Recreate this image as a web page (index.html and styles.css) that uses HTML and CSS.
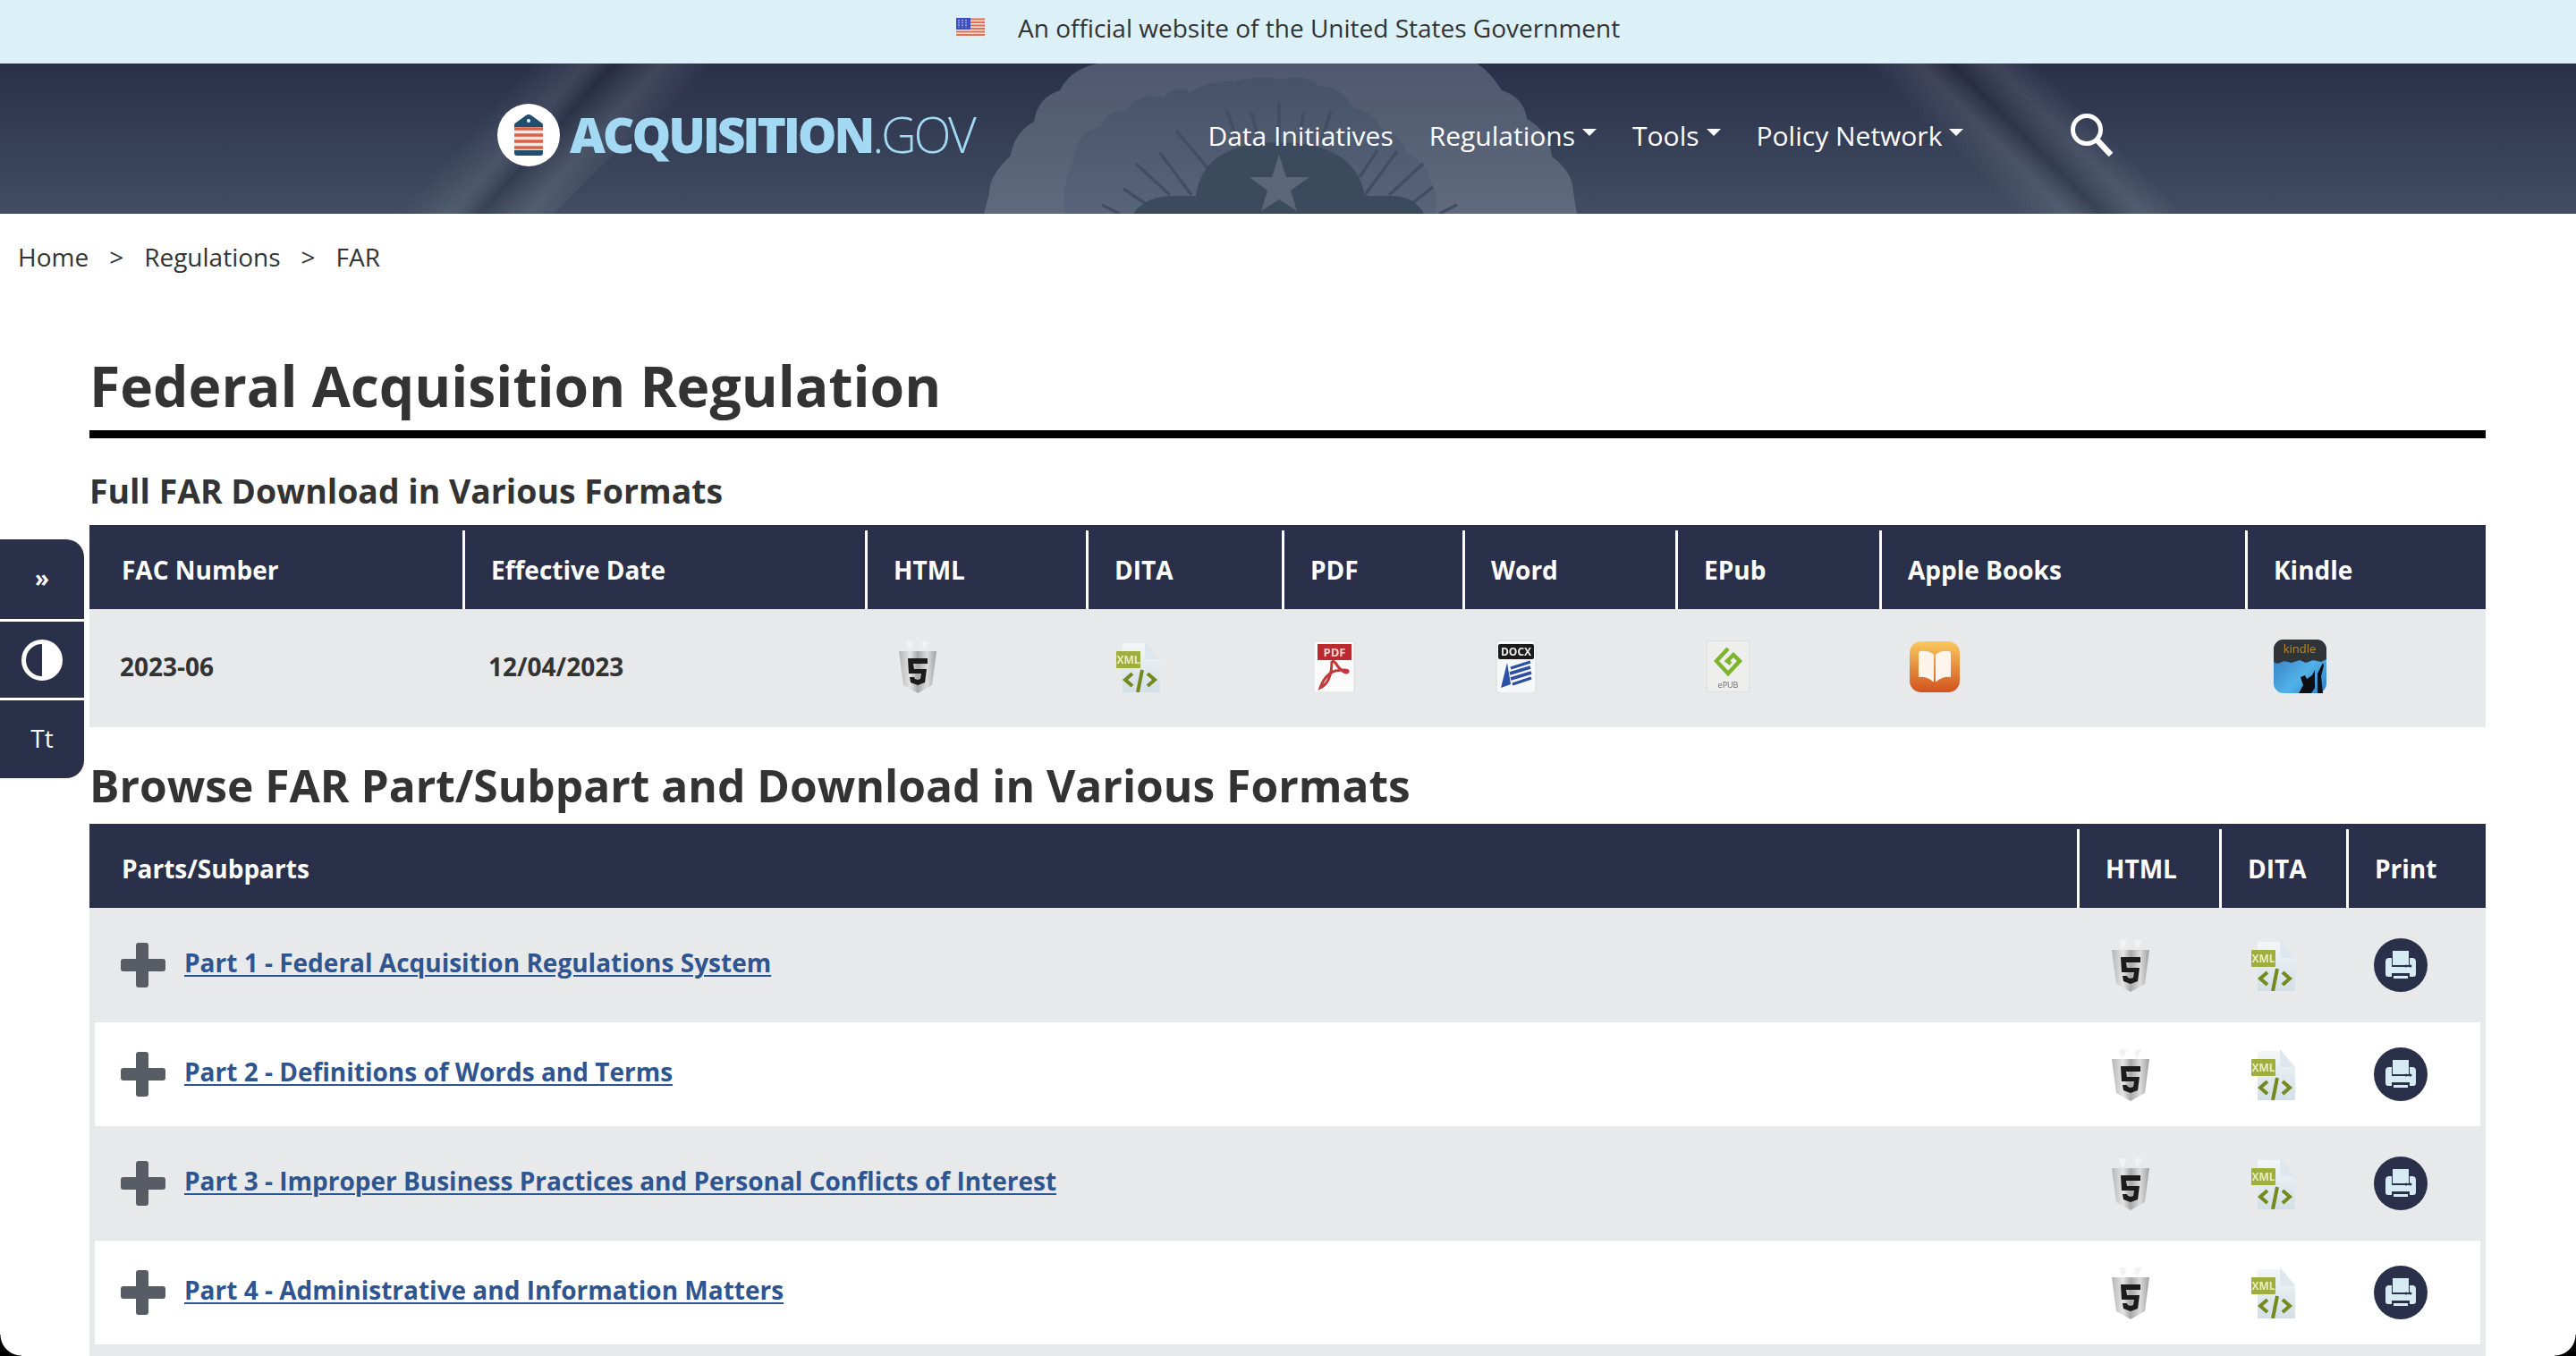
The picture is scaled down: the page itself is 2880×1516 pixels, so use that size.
FILE: index.html
```html
<!DOCTYPE html>
<html lang="en">
<head>
<meta charset="utf-8">
<title>Federal Acquisition Regulation | Acquisition.GOV</title>
<link rel="stylesheet" href="styles.css">
</head>
<body>
<svg class="defs" width="0" height="0" aria-hidden="true">
  <defs>
    <linearGradient id="band-left" gradientUnits="userSpaceOnUse" x1="563" y1="33" x2="677" y2="135">
      <stop offset="0" stop-color="#fff" stop-opacity="0"/><stop offset=".3" stop-color="#fff" stop-opacity=".09"/><stop offset=".46" stop-color="#000" stop-opacity=".12"/><stop offset=".72" stop-color="#fff" stop-opacity=".1"/><stop offset="1" stop-color="#fff" stop-opacity="0"/>
    </linearGradient>
    <linearGradient id="band-right" gradientUnits="userSpaceOnUse" x1="2217" y1="132" x2="2313" y2="36">
      <stop offset="0" stop-color="#fff" stop-opacity="0"/><stop offset=".3" stop-color="#fff" stop-opacity=".09"/><stop offset=".5" stop-color="#000" stop-opacity=".12"/><stop offset=".75" stop-color="#fff" stop-opacity=".09"/><stop offset="1" stop-color="#fff" stop-opacity="0"/>
    </linearGradient>
    <linearGradient id="seal-outer" x1="0" y1="0" x2="0" y2="1">
      <stop offset="0" stop-color="#4f586e"/><stop offset="1" stop-color="#5f6a7e"/>
    </linearGradient>
    <linearGradient id="seal-inner" x1="0" y1="0" x2="0" y2="1">
      <stop offset="0" stop-color="#465268"/><stop offset="1" stop-color="#586479"/>
    </linearGradient>
    <linearGradient id="silver" x1="0" y1="0" x2="1" y2="0">
      <stop offset="0" stop-color="#b4b4b4"/><stop offset=".3" stop-color="#e6e6e6"/><stop offset=".5" stop-color="#a8a8a8"/><stop offset=".75" stop-color="#dcdcdc"/><stop offset="1" stop-color="#a0a0a0"/>
    </linearGradient>
    <linearGradient id="doc" x1="0" y1="0" x2="0" y2="1">
      <stop offset="0" stop-color="#f3f6f8"/><stop offset="1" stop-color="#d3dfe7"/>
    </linearGradient>
    <linearGradient id="books" x1="0" y1="0" x2="0" y2="1">
      <stop offset="0" stop-color="#f8ca5e"/><stop offset="1" stop-color="#d2521f"/>
    </linearGradient>
    <linearGradient id="kindle-sky" x1="0" y1="0" x2="1" y2="1">
      <stop offset="0" stop-color="#2c6fb6"/><stop offset=".6" stop-color="#52b1e8"/><stop offset="1" stop-color="#2c7fc8"/>
    </linearGradient>
    <symbol id="i-html" viewBox="0 0 42 60">
      <path d="M9 2h7v4l-3 5h-2l-2-5zM26 2h8l-2 4-3 5h-2l-1-5z" fill="#f2f2f2"/>
      <path d="M0 13h42l-5 38-16 9-16-9z" fill="url(#silver)"/>
      <path d="M10 21h22v6H16l1 6h14l-2 15-8 3-8-3-1-6h5l1 2 3 1 3-1 1-6H11z" fill="#1c1c1c"/>
    </symbol>
    <symbol id="i-dita" viewBox="0 0 49 57">
      <path d="M7 2h26l16 19v36H7z" fill="url(#doc)"/>
      <path d="M32 0l17 20H32z" fill="#dfe7ee"/>
      <rect x="0" y="11" width="27" height="19" rx="1" fill="#9fae3e"/>
      <text x="13.5" y="25" class="tag-text">XML</text>
      <path d="M18 36l-8 7 8 7M35 36l8 7-8 7M29 32l-5 25" fill="none" stroke="#76891f" stroke-width="4"/>
    </symbol>
    <symbol id="i-pdf" viewBox="0 0 47 58">
      <rect x="1" y="1" width="45" height="57" rx="1" fill="#fbfbfb" stroke="#dcdcdc"/>
      <rect x="5" y="4" width="38" height="18" fill="#bb2a2e"/>
      <text x="24" y="18" class="pdf-text">PDF</text>
      <path d="M21 23c0 14-4 26-13 30 0 0 5-16 17-19 6-1 15-2 14 1s-9-1-14-10c-2-2-4-2-4-2" fill="none" stroke="#c13a3d" stroke-width="3"/>
    </symbol>
    <symbol id="i-word" viewBox="0 0 46 60">
      <rect x="1" y="1" width="44" height="59" rx="4" fill="#f6f7f9" stroke="#d8d8d8"/>
      <rect x="3" y="5" width="40" height="17" rx="2" fill="#1b1b1b"/>
      <text x="23" y="18" class="docx-text">DOCX</text>
      <path d="M6 54l7-28 4 24z" fill="#2a52a8"/>
      <path d="M17 32l22-7M16 38l23-7M17 44l23-7M19 50l21-7" fill="none" stroke="#2c4ea1" stroke-width="3.4"/>
    </symbol>
    <symbol id="i-epub" viewBox="0 0 48 58">
      <rect x=".5" y=".5" width="47" height="57" fill="#eeeeec" stroke="#dedede"/>
      <path d="M24 9L11 23l13 14 13-14-7-7-7 7 4 3" fill="none" stroke="#7cb52b" stroke-width="4.4"/>
      <text x="24" y="53" class="epub-text">ePUB</text>
    </symbol>
    <symbol id="i-books" viewBox="0 0 56 57">
      <rect width="56" height="57" rx="13" fill="url(#books)"/>
      <path d="M26 14c-4-3-9-4-14-3-1 0-2 1-2 2v27c6-1 12 1 16 5 1 1 1-1 1-1V15zM30 14c4-3 9-4 14-3 1 0 2 1 2 2v27c-6-1-12 1-16 5-1 1-1-1-1-1V15z" fill="#fdf4ec"/>
    </symbol>
    <symbol id="i-kindle" viewBox="0 0 59 60">
      <rect width="59" height="60" rx="11" fill="url(#kindle-sky)"/>
      <path d="M0 11a11 11 0 0 1 11-11h37a11 11 0 0 1 11 11v11l-6 3-9-2-8 3-7-3-9 3-8-2-8 3-4-2z" fill="#303338"/>
      <text x="29" y="15" class="kindle-text">kindle</text>
      <path d="M49 60V38l6-12 1 3-3 12 2 19zM28 60l5-9-3-9 5-2 2 4 6-4 3-6v20l-4 6z" fill="#0d0f12"/>
    </symbol>
    <symbol id="i-print" viewBox="0 0 60 60">
      <circle cx="30" cy="30" r="30" fill="#2a3049"/>
      <path d="M21 14h18v16H21z" fill="#d6ebf4"/>
      <path d="M17 22h3v10h20V22h3c3 0 4 2 4 4v14c0 2-1 3-3 3h-4v-4H20v4h-4c-2 0-3-1-3-3V26c0-2 1-4 4-4z" fill="#d6ebf4"/>
      <circle cx="41" cy="31" r="1.5" fill="#2a3049"/><circle cx="36" cy="31" r="1.5" fill="#2a3049"/>
      <rect x="22" y="42" width="16" height="3" fill="#d6ebf4"/>
    </symbol>
    <symbol id="i-plus" viewBox="0 0 50 50">
      <path d="M20 0h8a3 3 0 0 1 3 3v15h16a3 3 0 0 1 3 3v8a3 3 0 0 1-3 3H31v15a3 3 0 0 1-3 3h-8a3 3 0 0 1-3-3V32H3a3 3 0 0 1-3-3v-8a3 3 0 0 1 3-3h14V3a3 3 0 0 1 3-3z" fill="#585c65"/>
    </symbol>
  </defs>
</svg>

<div class="page">
  <div class="gov-banner">
    <svg class="flag" viewBox="0 0 32 22" aria-hidden="true">
      <rect width="32" height="22" fill="#f6e4dc"/>
      <path d="M0 1.5h32M0 5h32M0 8.5h32M0 12h32M0 15.5h32M0 19h32" stroke="#dd7058" stroke-width="1.8"/>
      <rect width="16" height="13" fill="#3d4ec0"/>
      <path d="M3 2v9M7 2v9M11 2v9" stroke="#c6cbef" stroke-width="1.4" stroke-dasharray="1.4 1.4"/>
    </svg>
    <span class="gov-text">An official website of the United States Government</span>
  </div>

  <header class="site-header">
    <svg class="header-art" viewBox="0 0 2880 168" aria-hidden="true">
      <path d="M578 0H813Q700 80 620 168H436Q490 75 578 0z" fill="url(#band-left)"/>
      <path d="M2069 0H2299Q2380 85 2445 168H2257Q2170 75 2069 0z" fill="url(#band-right)"/>
      <path d="M1227 0q-30 6-42 30-25 8-29 35-22 12-26 38-24 22-24 42l-6 23H1763l-4-24q0-22-24-40-3-28-28-42-3-24-28-32-14-22-28-30z" fill="url(#seal-outer)"/>
      <path d="M1191 168q-6-30 9-61 4-32 31-36 4-18 28-18 14-22 42-15 12-16 29-6 24-14 50-12 28-8 52-2 30-8 44 8 24-2 37 24 22 2 30 22 24 8 30 28 22 12 26 30 10 20 6 38z" fill="url(#seal-inner)"/>
      <g stroke="#414d62" stroke-width="3.4" fill="none">
        <path d="M1270 112l38 35M1297 100l35 47M1315 75l42 50M1372 53l12 35M1399 55l9 33M1430 43v45M1457 55l-4 33M1488 53l-11 35M1540 97l-20 30M1562 98l-36 49M1591 112l-38 35M1602 138l-24 19M1256 140l25 17M1232 158l20 10M1629 158l-20 10"/>
      </g>
      <path d="M1267 168q14-20 45-20h25q8-60 93-60t96 60h34q22 2 32 20z" fill="#3c4a5e"/>
      <path d="M1430 102l8 25h26l-21 15 7 23-20-13-20 13 7-23-20-15h25z" fill="#5b6679"/>
    </svg>
    <a class="logo" href="#">
      <span class="logo-badge">
        <svg class="shield" viewBox="0 0 32 46" aria-hidden="true">
          <path d="M2 9l11-8a5 5 0 0 1 6 0l11 8a3 3 0 0 1 2 3v31a3 3 0 0 1-3 3H3a3 3 0 0 1-3-3V12a3 3 0 0 1 2-3z" fill="#1e4f6f"/>
          <circle cx="16" cy="7" r="2" fill="#fff"/>
          <path d="M0 14h32v26H0z" fill="#f6e6df"/>
          <path d="M0 16h32M0 23h32M0 30h32M0 37h32" stroke="#d9614a" stroke-width="3.4"/>
        </svg>
      </span>
      <span class="logo-name">ACQUISITION</span><span class="logo-gov">.GOV</span>
    </a>
    <nav class="main-nav">
      <a href="#" class="nav-link">Data Initiatives</a>
      <a href="#" class="nav-link has-caret">Regulations</a>
      <a href="#" class="nav-link has-caret">Tools</a>
      <a href="#" class="nav-link has-caret">Policy Network</a>
    </nav>
    <svg class="search" viewBox="0 0 49 49" aria-hidden="true">
      <circle cx="19" cy="19" r="15.5" fill="none" stroke="#fff" stroke-width="5"/>
      <path d="M30 30l16 17" stroke="#fff" stroke-width="6.5"/>
    </svg>
  </header>

  <div class="breadcrumb">
    <a href="#">Home</a><span class="crumb-sep">&gt;</span><a href="#">Regulations</a><span class="crumb-sep">&gt;</span><a href="#">FAR</a>
  </div>

  <aside class="side-tools">
    <button class="tool tool-first">»</button>
    <button class="tool tool-mid"><span class="contrast"></span></button>
    <button class="tool tool-last">Tt</button>
  </aside>

  <main class="content">
    <h1 class="page-title">Federal Acquisition Regulation</h1>
    <h2 class="sub-title">Full FAR Download in Various Formats</h2>
    <table class="grid">
      <thead>
        <tr>
          <th class="w-fac">FAC Number</th>
          <th class="w-date">Effective Date</th>
          <th class="w-html">HTML</th>
          <th class="w-dita">DITA</th>
          <th class="w-pdf">PDF</th>
          <th class="w-word">Word</th>
          <th class="w-epub">EPub</th>
          <th class="w-books">Apple Books</th>
          <th class="w-kindle">Kindle</th>
        </tr>
      </thead>
      <tbody>
        <tr class="row-single">
          <td class="cell-first">2023-06</td>
          <td>12/04/2023</td>
          <td><svg class="ic ic-html"><use href="#i-html"/></svg></td>
          <td><svg class="ic ic-dita"><use href="#i-dita"/></svg></td>
          <td><svg class="ic ic-pdf"><use href="#i-pdf"/></svg></td>
          <td><svg class="ic ic-word"><use href="#i-word"/></svg></td>
          <td><svg class="ic ic-epub"><use href="#i-epub"/></svg></td>
          <td><svg class="ic ic-books"><use href="#i-books"/></svg></td>
          <td><svg class="ic ic-kindle"><use href="#i-kindle"/></svg></td>
        </tr>
      </tbody>
    </table>

    <h2 class="section-title">Browse FAR Part/Subpart and Download in Various Formats</h2>
    <table class="grid parts">
      <thead>
        <tr>
          <th class="w-part">Parts/Subparts</th>
          <th class="w-phtml">HTML</th>
          <th class="w-pdita">DITA</th>
          <th class="w-print">Print</th>
        </tr>
      </thead>
      <tbody>
        <tr class="row-gray">
          <td><div class="part"><svg class="plus"><use href="#i-plus"/></svg><a href="#">Part 1 - Federal Acquisition Regulations System</a></div></td>
          <td><svg class="ic ic-html"><use href="#i-html"/></svg></td>
          <td><svg class="ic ic-dita2"><use href="#i-dita"/></svg></td>
          <td><svg class="ic ic-print"><use href="#i-print"/></svg></td>
        </tr>
        <tr class="row-white">
          <td><div class="part"><svg class="plus"><use href="#i-plus"/></svg><a href="#">Part 2 - Definitions of Words and Terms</a></div></td>
          <td><svg class="ic ic-html"><use href="#i-html"/></svg></td>
          <td><svg class="ic ic-dita2"><use href="#i-dita"/></svg></td>
          <td><svg class="ic ic-print"><use href="#i-print"/></svg></td>
        </tr>
        <tr class="row-gray">
          <td><div class="part"><svg class="plus"><use href="#i-plus"/></svg><a href="#">Part 3 - Improper Business Practices and Personal Conflicts of Interest</a></div></td>
          <td><svg class="ic ic-html"><use href="#i-html"/></svg></td>
          <td><svg class="ic ic-dita2"><use href="#i-dita"/></svg></td>
          <td><svg class="ic ic-print"><use href="#i-print"/></svg></td>
        </tr>
        <tr class="row-white">
          <td><div class="part"><svg class="plus"><use href="#i-plus"/></svg><a href="#">Part 4 - Administrative and Information Matters</a></div></td>
          <td><svg class="ic ic-html"><use href="#i-html"/></svg></td>
          <td><svg class="ic ic-dita2"><use href="#i-dita"/></svg></td>
          <td><svg class="ic ic-print"><use href="#i-print"/></svg></td>
        </tr>
        <tr class="row-tail"><td></td><td></td><td></td><td></td></tr>
      </tbody>
    </table>
  </main>

  <div class="corner corner-left"></div>
  <div class="corner corner-right"></div>
</div>
</body>
</html>
```

FILE: styles.css
```css
* { box-sizing: border-box; }
html, body { margin: 0; padding: 0; background: #fff; }
body { font-family: "Open Sans", "Liberation Sans", sans-serif; color: #333; font-size: 30px; }
a { color: inherit; text-decoration: none; }
.defs { position: absolute; }
.page { position: relative; height: 1516px; overflow: hidden; }

.gov-banner { height: 71px; background: #dcf0f8; display: flex; align-items: center; padding: 0 0 10px 1069px; }
.flag { width: 32px; height: 22px; margin: 0 37px 0 0; }
.gov-text { font-size: 28px; color: #333; white-space: nowrap; }

.site-header { position: relative; height: 168px; background: linear-gradient(#2a3049, #404d62); display: flex; align-items: center; overflow: hidden; padding-bottom: 8px; }
.header-art { position: absolute; left: 0; top: 0; width: 2880px; height: 168px; }
.logo { position: relative; display: flex; align-items: center; margin-left: 556px; white-space: nowrap; }
.logo-badge { width: 70px; height: 70px; border-radius: 50%; background: #fff; display: flex; align-items: center; justify-content: center; margin-right: 11px; }
.shield { width: 32px; height: 46px; }
.logo-name { font-size: 55px; font-weight: 800; color: #a3d9f3; letter-spacing: -3.1px; margin-bottom: 4px; }
.logo-gov { font-size: 55px; font-weight: 300; color: #a3d9f3; letter-spacing: -3.4px; margin-bottom: 4px; }
.main-nav { position: relative; display: flex; gap: 40px; margin-left: 262px; }
.nav-link { color: #fff; font-size: 30px; white-space: nowrap; display: flex; align-items: center; }
.has-caret::after { content: ""; width: 0; height: 0; margin: -6px 0 0 8px; border-left: 8px solid transparent; border-right: 8px solid transparent; border-top: 8px solid #fff; }
.search { position: absolute; left: 2314px; top: 55px; width: 49px; height: 49px; }

.breadcrumb { height: 103px; padding: 30px 0 0 20px; font-size: 28px; color: #333; line-height: 36px; white-space: nowrap; }
.crumb-sep { margin: 0 23px; }

.side-tools { position: absolute; left: 0; top: 603px; width: 94px; height: 267px; display: flex; flex-direction: column; gap: 3px; }
.tool { border: 0; padding: 0; background: #2a3049; color: #fff; font-family: inherit; font-size: 28px; display: flex; align-items: center; justify-content: center; }
.tool-first { height: 89px; border-top-right-radius: 20px; padding-bottom: 3px; font-size: 26px; font-weight: 700; }
.tool-mid { height: 85px; }
.tool-last { height: 87px; border-bottom-right-radius: 20px; padding-bottom: 4px; }
.contrast { width: 46px; height: 46px; border-radius: 50%; border: 5px solid #fff; background: linear-gradient(90deg, #2a3049 50%, #fff 50%); }

.content { padding: 0 101px 0 100px; }
.page-title { margin: 0; height: 148px; padding-top: 46px; font-size: 62.4px; line-height: 86px; font-weight: 700; color: #333; border-bottom: 9px solid #000; white-space: nowrap; }
.sub-title { margin: 0; height: 97px; padding-top: 34px; font-size: 37.4px; line-height: 50px; font-weight: 700; color: #333; white-space: nowrap; }
.section-title { margin: 0; height: 108px; padding-top: 32px; font-size: 49.7px; line-height: 66px; font-weight: 700; color: #333; white-space: nowrap; }

.grid { width: 100%; table-layout: fixed; border-collapse: separate; border-spacing: 0; }
.grid th { position: relative; height: 94px; padding: 6px 0 0 32px; background: #2a3049; color: #fff; text-align: left; font-size: 28px; font-weight: 700; white-space: nowrap; }
.grid th:first-child { padding-left: 36px; }
.grid th + th::before { content: ""; position: absolute; left: 0; top: 6px; bottom: 0; width: 3px; background: #fff; }
.w-fac { width: 417px; } .w-date { width: 450px; } .w-html { width: 247px; } .w-dita { width: 219px; }
.w-pdf { width: 202px; } .w-word { width: 238px; } .w-epub { width: 228px; } .w-books { width: 409px; } .w-kindle { width: 269px; }
.w-phtml { width: 159px; } .w-pdita { width: 142px; } .w-print { width: 156px; }
.w-print { padding-left: 34px; }

.row-single td { height: 132px; background: #e8e9eb; padding: 0 0 4px 29px; font-size: 28px; font-weight: 700; color: #333; vertical-align: middle; }
.row-single td:first-child { padding-left: 34px; }
.ic { display: block; filter: blur(.6px); }
.ic-html { width: 42px; height: 60px; margin: 0 0 0 9px; }
.ic-dita { width: 49px; height: 57px; margin: 0 0 0 5px; }
.ic-dita2 { width: 49px; height: 57px; margin: 0 0 0 7px; }
.ic-pdf { width: 47px; height: 58px; margin: 0 0 0 6px; }
.ic-word { width: 46px; height: 60px; margin: 0 0 0 8px; }
.ic-epub { width: 48px; height: 58px; margin: 0 0 0 6px; }
.ic-books { width: 56px; height: 57px; margin: 0 0 0 5px; }
.ic-kindle { width: 59px; height: 60px; margin: 0 0 0 3px; }
.ic-print { width: 60px; height: 60px; margin: 0 0 0 2px; filter: none; }

.parts td { padding: 0 0 0 29px; vertical-align: middle; }
.parts .ic-html { margin-left: 10px; }
.row-gray td { height: 128px; background: #e8e9eb; }
.row-white td { height: 116px; background: #fff; }
.row-tail td { height: 13px; background: #e8e9eb; }
.parts td:first-child { padding-left: 35px; }
.row-white td:first-child { border-left: 6px solid #e8e9eb; padding-left: 29px; }
.row-white td:last-child { border-right: 6px solid #e8e9eb; }
.part { display: flex; align-items: center; gap: 21px; }
.plus { width: 50px; height: 50px; flex: none; }
.part a { color: #2f5590; font-size: 28px; font-weight: 700; text-decoration: underline; text-decoration-thickness: 2px; text-underline-offset: 3px; margin-top: -6px; white-space: nowrap; }

.tag-text, .pdf-text, .docx-text, .epub-text, .kindle-text { font-family: "Open Sans", sans-serif; text-anchor: middle; font-weight: 700; }
.tag-text { font-size: 12px; fill: #e8eec0; }
.pdf-text { font-size: 13px; fill: #f6d6d6; }
.docx-text { font-size: 12px; fill: #eee; }
.epub-text { font-size: 9px; fill: #666; font-weight: 400; }
.kindle-text { font-size: 13px; fill: #c08a20; font-weight: 400; }

.corner { position: absolute; bottom: 0; width: 24px; height: 24px; }
.corner-left { left: 0; background: radial-gradient(circle at 100% 0, transparent 23px, #000 24px); }
.corner-right { right: 0; background: radial-gradient(circle at 0 0, transparent 23px, #000 24px); }
```
